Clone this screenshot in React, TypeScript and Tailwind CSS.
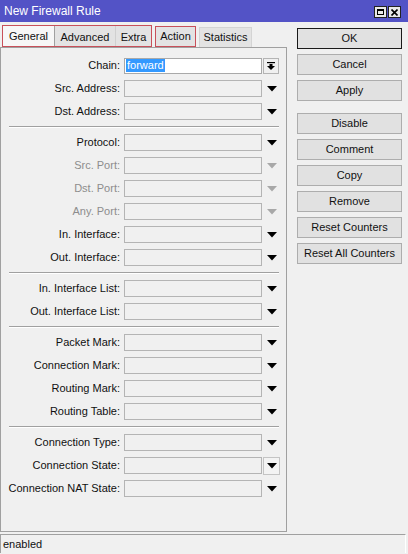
import React from 'react';

type Row = { label: string; disabled?: boolean; kind?: 'chain' | 'hover' };

const SECTIONS: Row[][] = [
  [{ label: 'Chain:', kind: 'chain' }, { label: 'Src. Address:' }, { label: 'Dst. Address:' }],
  [
    { label: 'Protocol:' },
    { label: 'Src. Port:', disabled: true },
    { label: 'Dst. Port:', disabled: true },
    { label: 'Any. Port:', disabled: true },
    { label: 'In. Interface:' },
    { label: 'Out. Interface:' },
  ],
  [{ label: 'In. Interface List:' }, { label: 'Out. Interface List:' }],
  [{ label: 'Packet Mark:' }, { label: 'Connection Mark:' }, { label: 'Routing Mark:' }, { label: 'Routing Table:' }],
  [{ label: 'Connection Type:' }, { label: 'Connection State:', kind: 'hover' }, { label: 'Connection NAT State:' }],
];

const BUTTONS = ['OK', 'Cancel', 'Apply', 'Disable', 'Comment', 'Copy', 'Remove', 'Reset Counters', 'Reset All Counters'];

const Arrow = ({ gray }: { gray?: boolean }) => (
  <svg width="10" height="6" viewBox="0 0 10 6">
    <path d="M0 0 H10 L5 5.5 Z" fill={gray ? '#a8a8a8' : '#000'} />
  </svg>
);

const FieldRow = ({ row }: { row: Row }) => (
  <div className="h-[23px] flex items-center">
    <div className={`w-[120px] text-right pr-px ${row.disabled ? 'text-[#8d8d8d]' : 'text-[#111]'}`}>{row.label}</div>
    {row.kind === 'chain' ? (
      <div className="ml-[3px] w-[138px] h-[16px] bg-white border border-[#a9a9a9] flex items-center pl-px">
        <span className="bg-[#3399ff] text-white leading-[13px] px-px">forward</span>
      </div>
    ) : (
      <div className="ml-[3px] w-[138px] h-[17px] border border-[#b4b4b4] bg-[#f0f0f0]" />
    )}
    {row.kind === 'chain' ? (
      <div className="ml-px w-[16px] h-[16px] border border-[#b4b4b4] bg-[#f0f0f0] flex flex-col items-center justify-center">
        <svg width="8" height="8" viewBox="0 0 8 8">
          <rect x="0" y="0" width="8" height="1.2" fill="#000" />
          <path d="M2.5 2 H5.5 V4 H8 L4 8 L0 4 H2.5 Z" fill="#000" />
        </svg>
      </div>
    ) : row.kind === 'hover' ? (
      <div className="ml-px w-[17px] h-[18px] border border-[#c4c4c4] bg-[#f3f3f3] flex items-center justify-center">
        <Arrow />
      </div>
    ) : (
      <div className="ml-px w-[17px] flex items-center justify-center">
        <Arrow gray={row.disabled} />
      </div>
    )}
  </div>
);

const Separator = () => (
  <div className="h-[8px] flex items-center">
    <div className="ml-[8px] w-[270px] border-t border-[#a0a0a0] border-b border-b-white" />
  </div>
);

export default function App() {
  return (
    <div
      className="w-[408px] h-[554px] bg-[#f0f0f0] flex flex-col text-[11px] text-[#111] overflow-hidden"
      style={{ fontFamily: '"Liberation Sans", Arial, sans-serif' }}
    >
      {/* Title bar */}
      <div className="h-[22px] bg-[#5353c6] flex items-center justify-between pl-[4px] pr-[7px]">
        <span className="text-white text-[12px]">New Firewall Rule</span>
        <div className="flex gap-px mt-[2px]">
          <div className="w-[13px] h-[12px] bg-[#e9e9e9] border border-[#222] flex items-center justify-center">
            <div className="w-[7px] h-[6px] border border-black border-t-2" />
          </div>
          <div className="w-[13px] h-[12px] bg-[#e9e9e9] border border-[#222] flex items-center justify-center">
            <svg width="7" height="7" viewBox="0 0 7 7">
              <path d="M0.5 0.5 L6.5 6.5 M6.5 0.5 L0.5 6.5" stroke="#000" strokeWidth="1.6" />
            </svg>
          </div>
        </div>
      </div>

      <div className="flex">
        {/* Left: tabs + panel */}
        <div className="w-[287px] flex flex-col">
          <div className="h-[25px] pt-[3px] flex items-end pl-[2px] gap-[3px]">
            <div className="flex h-[22px] border border-[#c8505a]">
              <div className="w-[52px] bg-[#f7f7f7] flex items-center justify-center border-r border-[#a0a0a0]">General</div>
              <div className="w-[61px] bg-[#e3e3e3] flex items-center justify-center border-r border-[#d0d0d0] pt-[2px]">Advanced</div>
              <div className="w-[35px] bg-[#e3e3e3] flex items-center justify-center pt-[2px]">Extra</div>
            </div>
            <div className="w-[41px] h-[21px] border border-[#c8505a] bg-[#e3e3e3] flex items-center justify-center">Action</div>
            <div className="w-[53px] h-[20px] border border-b-0 border-[#d4d4d4] bg-[#e3e3e3] flex items-center justify-center">Statistics</div>
          </div>
          <div className="h-[485px] border border-[#a0a0a0] pt-[6px]">
            {SECTIONS.map((section, i) => (
              <React.Fragment key={i}>
                {i > 0 && <Separator />}
                {section.map(row => (
                  <FieldRow key={row.label} row={row} />
                ))}
              </React.Fragment>
            ))}
          </div>
        </div>

        {/* Right: buttons */}
        <div className="ml-[10px] pt-[6px] flex flex-col">
          {BUTTONS.map((b, i) => (
            <div
              key={b}
              className={`w-[105px] h-[21px] flex items-center justify-center bg-[#e1e1e1] border ${
                i === 0 ? 'border-[#1a1a1a]' : 'border-[#adadad]'
              } ${i === 0 ? '' : i === 3 ? 'mt-[12px]' : 'mt-[5px]'}`}
            >
              {b}
            </div>
          ))}
        </div>
      </div>

      {/* Status bar */}
      <div className="mt-[2px] w-[406px] h-[19px] border-t border-l border-[#a0a0a0] border-r border-r-white flex items-center pl-[2px]">
        enabled
      </div>
    </div>
  );
}
